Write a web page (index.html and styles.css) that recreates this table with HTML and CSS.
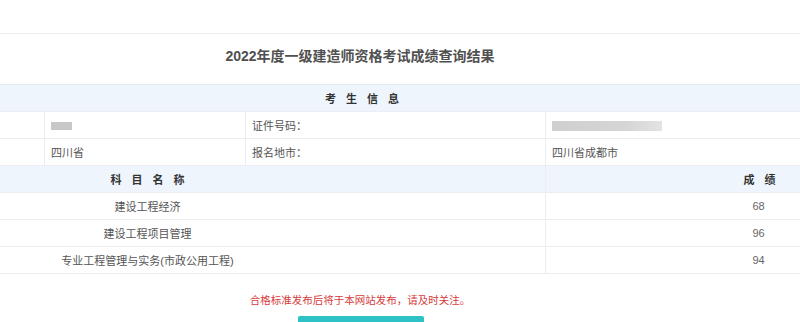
FILE: index.html
```html
<!DOCTYPE html>
<html lang="zh-CN">
<head>
<meta charset="utf-8">
<title>成绩查询结果</title>
<link rel="stylesheet" href="styles.css">
</head>
<body>
<div class="page">
  <div class="topbar"></div>
  <div class="main">
    <h1 class="title">2022年度一级建造师资格考试成绩查询结果</h1>
    <table class="grid">
      <colgroup><col class="c1"><col class="c2"><col class="c3"><col class="c4"></colgroup>
      <tr class="head"><th colspan="4" class="sec">考生信息</th></tr>
      <tr><td></td><td><span class="mask m1"></span></td><td>证件号码：</td><td><span class="mask m2"></span></td></tr>
      <tr><td></td><td>四川省</td><td>报名地市：</td><td>四川省成都市</td></tr>
      <tr class="head"><th colspan="3" class="subj">科目名称</th><th class="score">成绩</th></tr>
      <tr><td colspan="3" class="center">建设工程经济</td><td class="center num">68</td></tr>
      <tr><td colspan="3" class="center">建设工程项目管理</td><td class="center num">96</td></tr>
      <tr><td colspan="3" class="center">专业工程管理与实务(市政公用工程)</td><td class="center num">94</td></tr>
    </table>
    <p class="note">合格标准发布后将于本网站发布，请及时关注。</p>
    <div class="actions"><span class="btn"></span></div>
  </div>
</div>
</body>
</html>
```
FILE: styles.css
```css
html, body {
  margin: 0;
  padding: 0;
  background: #fff;
  overflow: hidden;
}
body {
  font-family: "Liberation Sans", "Noto Sans CJK SC", sans-serif;
  color: #555;
}
.page {
  width: 1222px;
  margin-left: -251px;
}
.topbar {
  height: 33px;
}
.main {
  border-top: 1px solid #ececec;
}
.title {
  margin: 0;
  height: 50px;
  line-height: 45px;
  text-align: center;
  font-size: 14px;
  font-weight: bold;
  color: #505050;
}
.grid {
  width: 1222px;
  border-collapse: collapse;
  table-layout: fixed;
  font-size: 11px;
}
.c1 { width: 295px; }
.c2 { width: 201px; }
.c3 { width: 300px; }
.c4 { width: 426px; }
.grid td, .grid th {
  height: 26px;
  padding: 0 0 0 6px;
  border: 1px solid #eaeef2;
  text-align: left;
  vertical-align: middle;
  color: #555;
  font-weight: normal;
  white-space: nowrap;
}
.grid tr:first-child th {
  border-top-color: #e4e8ec;
}
.grid .head th {
  background: #eef5fc;
  color: #333;
  font-weight: bold;
  letter-spacing: 10px;
  text-align: center;
}
.grid .head .sec { padding-left: 13px; }
.grid .head .subj { padding-left: 10px; }
.grid .head .score { padding-left: 12px; }
.grid td.center {
  text-align: center;
  padding-left: 0;
}
.grid td.num {
  color: #666;
}
.mask {
  display: inline-block;
  vertical-align: middle;
  filter: blur(0.6px);
}
.m1 {
  width: 21px;
  height: 8px;
  background: #c8c8c8;
}
.m2 {
  width: 110px;
  height: 10px;
  background: linear-gradient(90deg, #cfcfcf, #d6d6d6 70%, #e3e3e3);
}
.note {
  margin: 18px 0 0;
  line-height: 16px;
  text-align: center;
  font-size: 10.5px;
  color: #d63a3a;
}
.actions {
  margin-top: 8px;
  display: flex;
  justify-content: center;
}
.btn {
  display: block;
  width: 126px;
  height: 36px;
  margin-left: 2px;
  background: #2cc2c6;
  border-radius: 2px;
}
```
